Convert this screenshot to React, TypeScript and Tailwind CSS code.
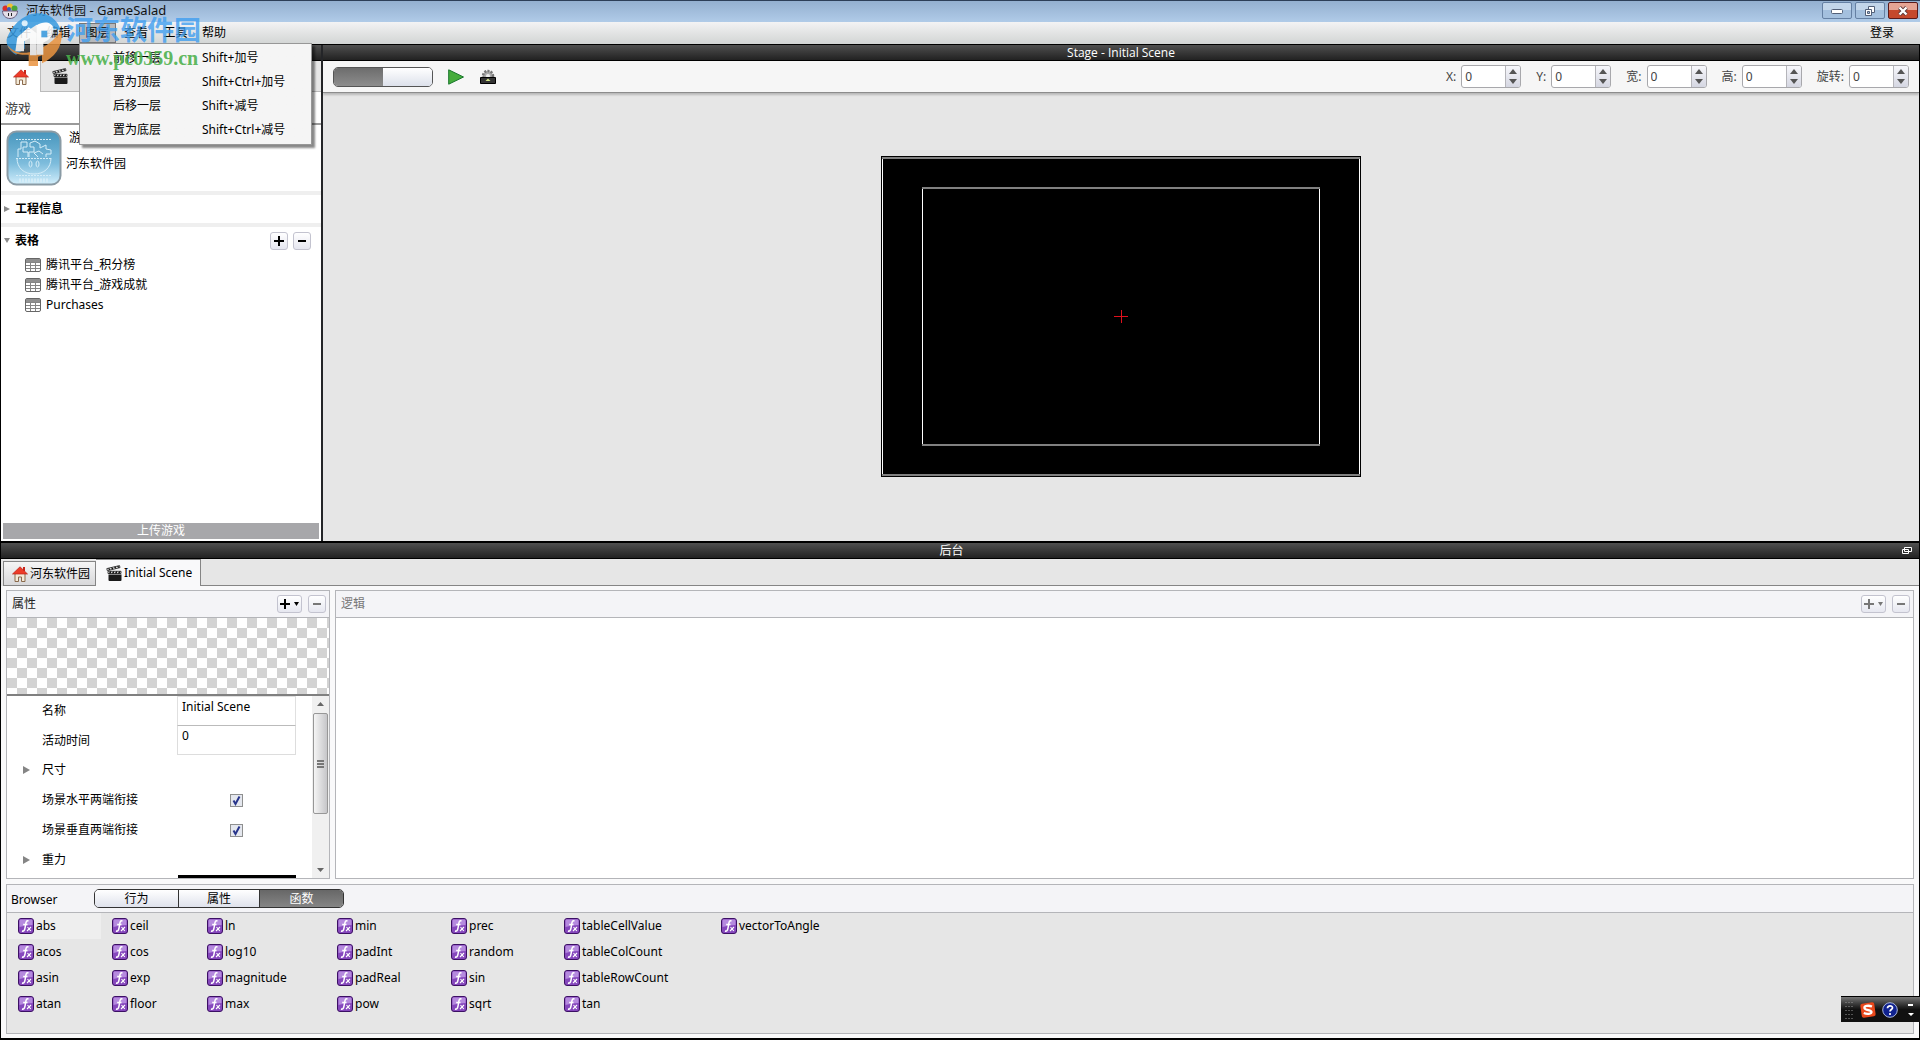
import { useState, type ReactNode } from "react";

interface FunctionColumn {
  width: string;
  items: string[];
}

const shortcuts = [
  { label: "前移一层", keys: "Shift+加号" },
  { label: "置为顶层", keys: "Shift+Ctrl+加号" },
  { label: "后移一层", keys: "Shift+减号" },
  { label: "置为底层", keys: "Shift+Ctrl+减号" },
];

const tables = ["腾讯平台_积分榜", "腾讯平台_游戏成就", "Purchases"];

const functionColumns: FunctionColumn[] = [
  { width: "w-[94px]", items: ["abs", "acos", "asin", "atan"] },
  { width: "w-[95px]", items: ["ceil", "cos", "exp", "floor"] },
  { width: "w-[130px]", items: ["ln", "log10", "magnitude", "max"] },
  { width: "w-[114px]", items: ["min", "padInt", "padReal", "pow"] },
  { width: "w-[113px]", items: ["prec", "random", "sin", "sqrt"] },
  { width: "w-[157px]", items: ["tableCellValue", "tableColCount", "tableRowCount", "tan"] },
  { width: "w-[130px]", items: ["vectorToAngle"] },
];

function HouseIcon() {
  return (
    <svg viewBox="0 0 16 16" className="size-4 shrink-0">
      <path d="M3 8v7.500h3.500V11h3v4.500H13V8L8 3.500z" fill="#f3ead8" stroke="#8b6a4c" />
      <path d="M11 1h2v4h-2z" fill="#c9261a" />
      <path d="M.5 8 8 .8 15.500 8z" fill="#ee3b28" stroke="#b72318" strokeWidth=".7" />
    </svg>
  );
}

function ClapperIcon() {
  return (
    <svg viewBox="0 0 16 16" className="size-4 shrink-0">
      <path d="M2.500 9.500h13V15a1 1 0 0 1-1 1h-11a1 1 0 0 1-1-1z" fill="#1a1a1a" />
      <path d="M2 6.300h13v2.200H2z" fill="#fff" stroke="#111" strokeWidth=".8" />
      <path d="m3.500 8.500 1.500-2M6.500 8.500l1.500-2M9.500 8.500l1.500-2M12.500 8.500l1.500-2" stroke="#111" strokeWidth="1.300" />
      <path d="M.8 3.600 13.500.6l.5 2L1.300 5.700z" fill="#fff" stroke="#111" strokeWidth=".8" />
      <path d="m2.500 3.500 1.500 1.300M5.500 2.700 7 4M8.500 2l1.500 1.300M11.500 1.200 13 2.500" stroke="#111" strokeWidth="1.300" />
    </svg>
  );
}

function TableIcon() {
  return (
    <svg viewBox="0 0 16 14" className="h-3.5 w-4 shrink-0">
      <rect x=".5" y=".5" width="15" height="13" rx="1.500" fill="#fff" stroke="#666" />
      <path d="M1 1h14v3H1z" fill="#8f8f8f" />
      <path d="M1 4.500h14M1 7.500h14M1 10.500h14M5.500 4v9M10.500 4v9" stroke="#858585" />
    </svg>
  );
}

function FxIcon() {
  return (
    <svg viewBox="0 0 16 16" className="size-4 shrink-0">
      <rect x=".5" y=".5" width="15" height="15" rx="2.500" fill="#8648bd" stroke="#3c1064" />
      <path d="M1.500 2.500a1 1 0 0 1 1-1h11a1 1 0 0 1 1 1V7Q8 7 1.500 9z" fill="#b58ade" />
      <path d="M10.500 3C8.200 2.300 8 4 7.500 7.200 7 11 6.500 13.800 4 13M5.200 6.500h4.300" fill="none" stroke="#fff" strokeWidth="1.500" />
      <path d="m9.500 9 3.300 4M13 9l-4 4" stroke="#fff" strokeWidth="1.100" />
    </svg>
  );
}

function AppIcon() {
  return (
    <svg viewBox="0 0 16 16" className="size-4 shrink-0">
      <circle cx="3.500" cy="5.500" r="3" fill="#d9302a" />
      <circle cx="8" cy="3.500" r="3" fill="#f0c233" />
      <circle cx="12.500" cy="5.500" r="3" fill="#4aa53c" />
      <circle cx="7" cy="6" r="2" fill="#3b5bbf" />
      <path d="M.5 8h15c0 4-3 7.500-7.500 7.500S.5 12 .5 8z" fill="#e4dfe8" stroke="#685b7c" />
      <path d="M6.500 10v3M9.500 10v3" stroke="#222" />
    </svg>
  );
}

function SaladIcon() {
  return (
    <svg viewBox="0 0 56 56" className="size-14 shrink-0">
      <defs>
        <linearGradient id="salad" x2="0" y2="1">
          <stop offset="0" stopColor="#4796bd" />
          <stop offset=".6" stopColor="#7dbcdc" />
          <stop offset="1" stopColor="#d3effc" />
        </linearGradient>
      </defs>
      <rect x="1.500" y="1.500" width="53" height="53" rx="9" fill="url(#salad)" stroke="#8a9ba5" strokeWidth="2" />
      <g fill="none" stroke="#d5edf8">
        <path d="M10 9.500h36M10 28.500h36M10 45.500h36" strokeDasharray="2 1" />
        <path d="M11 28C11 38 18 44 28 44s17-6 17-16" />
        <path d="M12 27v-8h3v-7h6v5h-4v5h5v5M23 27v-5h5v-5h-4v-4l5-2 5 3v4l6-3v4l5 1v4h-5v3M32 27l-4-4 5-2 4 3" />
        <ellipse cx="24.500" cy="34" rx="1.500" ry="3" />
        <ellipse cx="31.500" cy="34" rx="1.500" ry="3" />
        <path d="M13 50.500h30" strokeWidth="4" strokeDasharray="2 1" />
      </g>
    </svg>
  );
}

function Watermark() {
  return (
    <div className="pointer-events-none absolute top-3 left-1 z-20 flex items-start">
      <svg viewBox="0 0 180 180" className="size-[60px] shrink-0">
        <g opacity=".85">
          <path d="M8 82C20 45 55 8 95 4c35-3 65 15 76 52-20-10-30 2-44 4L98 38 62 62v48l-26 18C18 118 6 102 8 82z" fill="#369ae0" />
          <path d="M10 98c20 26 50 30 82 18 36-12 56-30 80-60 6 40-14 78-58 98v-24l-12 4v28H74v-34c-30 2-54-4-64-30z" fill="#ea9440" />
          <path d="M40 76 74 46l24 18v66H78V78L60 88v30H34z" fill="#fff" />
          <path d="M98 40c20-14 46-10 50 8 2 20-8 34-30 44v36H98z" fill="#fff" />
          <path d="M112 56h18v20h-18z" fill="#369ae0" />
          <circle cx="62" cy="34" r="9" fill="#d9effc" />
        </g>
      </svg>
      <div className="flex flex-col pl-0.5">
        <span className="text-[27px] leading-9 font-bold whitespace-nowrap text-[#3d9df0]/80">河东软件园</span>
        <span className="font-['Liberation_Serif',serif] text-xl leading-5 font-bold whitespace-nowrap text-[#4bb04b]/90">
          www.pc0359.cn
        </span>
      </div>
    </div>
  );
}

function WindowButton({ label, close, children }: { label: string; close?: boolean; children: ReactNode }) {
  return (
    <button
      aria-label={label}
      className={`flex h-[17px] w-[30px] items-center justify-center rounded-[2px] border ${
        close
          ? "border-[#5a1a1a] bg-linear-to-b from-[#e5a494] from-50% to-[#c5482c] to-50%"
          : "border-[#6580a3] bg-linear-to-b from-[#c3d6ea] from-50% to-[#a4c0de] to-50%"
      }`}
    >
      {children}
    </button>
  );
}

function TitleBar() {
  return (
    <header className="flex h-[22px] items-center gap-2 border-t border-[#2d3f58] bg-linear-to-b from-[#94b0d0] to-[#b0cbe8] pr-0.5 pb-0.5 pl-0.5">
      <AppIcon />
      <h1 className="flex-1 text-[#111]">
        河东软件园<span className="text-[13px]"> - GameSalad</span>
      </h1>
      <div className="flex gap-[3px]">
        <WindowButton label="最小化">
          <svg viewBox="0 0 12 6" className="h-1.5 w-3">
            <rect x=".5" y="1.500" width="11" height="4" rx="1" fill="#fff" stroke="#536078" />
          </svg>
        </WindowButton>
        <WindowButton label="还原">
          <svg viewBox="0 0 12 12" className="size-3">
            <path d="M4.500 1.500h6v6h-6z" fill="#fff" stroke="#536078" />
            <path d="M1.500 4.500h6v6h-6z" fill="#fff" stroke="#536078" />
            <path d="M3.500 6.500h2v2h-2z" fill="#a4c0de" stroke="#536078" />
          </svg>
        </WindowButton>
        <WindowButton label="关闭" close>
          <svg viewBox="0 0 12 10" className="h-2.5 w-3">
            <path d="m2.500 1.500 7 7M9.500 1.500l-7 7" stroke="#5b3838" strokeWidth="4" />
            <path d="m2.500 1.500 7 7M9.500 1.500l-7 7" stroke="#fff" strokeWidth="2.400" />
          </svg>
        </WindowButton>
      </div>
    </header>
  );
}

function MenuBar() {
  return (
    <nav className="relative flex h-[22px] items-center bg-linear-to-b from-[#f3f3f4] to-[#d2d5d4]">
      <button className="w-[38px]">文件</button>
      <button className="w-[41px]">编辑</button>
      <button className="h-5 w-[37px] border border-[#777] bg-[#b7b9bb]">图层</button>
      <button className="w-[40px]">查看</button>
      <button className="w-[39px]">工具</button>
      <button className="w-[38px]">帮助</button>
      <button className="mr-[22px] ml-auto px-1">登录</button>
      <ul className="absolute top-[21px] left-[79px] z-10 w-[233px] border border-[#979797] bg-linear-to-r from-[#f0f0f0] from-[30px] to-[#f5f5f5] to-[31px] py-0.5 shadow-[3px_3px_2px_#0007]">
        {shortcuts.map((item) => (
          <li key={item.label}>
            <button className="flex h-6 w-full items-center pl-[33px] text-left">
              <span className="w-[89px]">{item.label}</span>
              <span>{item.keys}</span>
            </button>
          </li>
        ))}
      </ul>
    </nav>
  );
}

function SquareButton({ label, minus, menu, faded }: { label: string; minus?: boolean; menu?: boolean; faded?: boolean }) {
  return (
    <button
      aria-label={label}
      className={`flex h-[18px] items-center justify-center gap-1 rounded-[3px] border border-[#c3c3cf] bg-linear-to-b from-white to-[#e6e7f0] ${
        menu ? "w-[25px]" : "w-[18px]"
      } ${faded ? "text-[#777]" : "text-black"}`}
    >
      <svg viewBox="0 0 10 10" className="size-2.5" stroke="currentColor" strokeWidth="2">
        <path d={minus ? "M1 5h8" : "M0 5h10M5 0v10"} />
      </svg>
      {menu && (
        <svg viewBox="0 0 5 4" className="h-1 w-[5px]" fill="currentColor">
          <path d="M0 0h5L2.500 4z" />
        </svg>
      )}
    </button>
  );
}

function Arrow({ down }: { down?: boolean }) {
  return (
    <svg viewBox="0 0 6 6" className="size-1.5 shrink-0" fill="#8a8a8a">
      <path d={down ? "M0 0h6L3 5z" : "M0 0v6l6-3z"} />
    </svg>
  );
}

function ProjectPanel() {
  return (
    <aside className="flex w-[322px] shrink-0 flex-col border-r-2 border-[#242528] bg-white">
      <div className="h-4 border-b border-black bg-linear-to-b from-[#505050] to-[#222]" />
      <div className="flex h-[31px]">
        <button aria-label="主页" className="flex w-[39px] items-center justify-center">
          <HouseIcon />
        </button>
        <button aria-label="场景" className="flex w-[39px] items-center justify-center border-b border-l border-[#bbb] bg-[#e6e6e6]">
          <ClapperIcon />
        </button>
        <div className="flex-1 border-b border-[#bbb] bg-[#e6e6e6]" />
      </div>
      <h2 className="flex h-[33px] items-center border-b-2 border-[#9a9a9a] pt-0.5 pl-1 text-[13px] text-[#444]">游戏</h2>
      <div className="flex h-[70px] gap-[3px] border-b-4 border-[#efefef] pl-[5px]">
        <div className="pt-[5px]">
          <SaladIcon />
        </div>
        <div className="leading-[26px]">
          <p className="pl-1">游戏</p>
          <p className="pl-px">河东软件园</p>
        </div>
      </div>
      <button className="flex h-8 items-center gap-[5px] border-b-4 border-[#efefef] pl-[3px] font-bold">
        <Arrow />
        工程信息
      </button>
      <div className="flex h-7 items-center pr-2.5 pl-[3px]">
        <button className="flex flex-1 items-center gap-[5px] font-bold">
          <Arrow down />
          表格
        </button>
        <div className="flex gap-[5px]">
          <SquareButton label="添加表格" />
          <SquareButton label="删除表格" minus />
        </div>
      </div>
      <ul className="pl-6">
        {tables.map((name) => (
          <li key={name} className="flex h-5 items-center gap-[5px]">
            <TableIcon />
            {name}
          </li>
        ))}
      </ul>
      <button className="mx-0.5 mt-auto mb-0.5 h-4 bg-[#a7a7aa] leading-4 text-white">上传游戏</button>
    </aside>
  );
}

function NumberField({ id, label }: { id: string; label: string }) {
  const [value, setValue] = useState(0);

  return (
    <div className="flex items-center gap-[5px] text-[#444]">
      <label htmlFor={id}>{label}</label>
      <div className="flex h-[23px] w-[60px] overflow-hidden rounded-[3px] border border-[#a8a8ac] bg-white">
        <input
          id={id}
          value={value}
          onChange={(e) => setValue(Number(e.target.value) || 0)}
          className="min-w-0 flex-1 pl-[3px] outline-none"
        />
        <div className="flex w-[15px] flex-col border-l border-[#b5b5ba] bg-linear-to-b from-[#f7f7fb] to-[#d5d7e2]">
          <button aria-label={`${label} +`} onClick={() => setValue(value + 1)} className="flex flex-1 items-center justify-center">
            <svg viewBox="0 0 8 5" className="h-[5px] w-2" fill="#555">
              <path d="M4 0l4 5H0z" />
            </svg>
          </button>
          <button aria-label={`${label} -`} onClick={() => setValue(value - 1)} className="flex flex-1 items-center justify-center">
            <svg viewBox="0 0 8 5" className="h-[5px] w-2" fill="#555">
              <path d="M0 0h8L4 5z" />
            </svg>
          </button>
        </div>
      </div>
    </div>
  );
}

function StagePanel() {
  return (
    <section className="flex flex-1 flex-col bg-[#e6e6e6]">
      <h2 className="h-4 border-b border-black bg-linear-to-b from-[#505050] to-[#222] text-center font-['Open_Sans',sans-serif] leading-4 text-white">
        Stage - Initial Scene
      </h2>
      <div className="flex h-8 items-center border-b border-[#8c8c8c] bg-[#f6f6f6] pr-2.5 pl-2.5 shadow-[0_2px_2px_#0003]">
        <div className="flex h-5 w-[100px] overflow-hidden rounded-[5px] border border-[#555]">
          <button aria-label="场景视图" className="flex-1 bg-linear-to-b from-[#6d6d6d] to-[#8d8d8d]" />
          <button aria-label="镜头视图" className="flex-1 bg-linear-to-b from-white to-[#dde1eb]" />
        </div>
        <button aria-label="预览" className="ml-[15px]">
          <svg viewBox="0 0 16 16" className="size-4">
            <path d="M.7.8v14.400L15.500 8z" fill="#45ad3c" stroke="#18762c" strokeLinejoin="round" />
          </svg>
        </button>
        <button aria-label="发布" className="ml-4">
          <svg viewBox="0 0 16 16" className="size-4">
            <circle cx="8" cy="7" r="5" fill="#aaa" stroke="#777" strokeWidth="2.500" strokeDasharray="2 1.200" />
            <circle cx="8" cy="7" r="2" fill="#eee" />
            <path d="M.5 8.500h15v6H.5z" fill="#333" stroke="#000" />
            <path d="m8 9.500 2.500 2.500h-5z" fill="#d5e88a" />
          </svg>
        </button>
        <div className="ml-auto flex gap-[15px]">
          <NumberField id="pos-x" label="X:" />
          <NumberField id="pos-y" label="Y:" />
          <NumberField id="width" label="宽:" />
          <NumberField id="height" label="高:" />
          <NumberField id="rotation" label="旋转:" />
        </div>
      </div>
      <div className="flex flex-1 items-center justify-center pb-px">
        <div className="border border-black">
          <svg viewBox="0 0 478 319" className="h-[319px] w-[478px] bg-black">
            <path d="M.5 0v319M477.500 0v319M40.500 30v259M437.500 30v259" stroke="#fff" />
            <path d="M0 1h478M0 318h478M40 31h398M40 288h398" stroke="#808080" strokeWidth="2" />
            <path d="M232 159.500h14M239.500 153v13" stroke="#e0101c" />
          </svg>
        </div>
      </div>
    </section>
  );
}

function PanelHead({ title, faded }: { title: string; faded?: boolean }) {
  return (
    <div className="flex h-[27px] items-center border-b border-[#b4b5b9] bg-[#f4f4f7] pr-[3px] pb-px pl-[5px]">
      <h3 className={`flex-1 pt-px ${faded ? "text-[#777]" : "text-[#222]"}`}>{title}</h3>
      <div className="flex gap-1.5">
        <SquareButton label={`添加${title}`} menu faded={faded} />
        <SquareButton label={`删除${title}`} minus faded />
      </div>
    </div>
  );
}

function CheckRow({ id, label }: { id: string; label: string }) {
  return (
    <div className="flex h-[30px] items-center pl-[35px]">
      <label htmlFor={id} className="w-[188px]">
        {label}
      </label>
      <span className="relative flex size-[13px]">
        <input id={id} type="checkbox" defaultChecked className="peer size-[13px] appearance-none border border-[#8e8f8f] bg-[#e4e7ee]" />
        <svg viewBox="0 0 13 13" className="pointer-events-none absolute inset-0 hidden size-[13px] peer-checked:block">
          <path d="M3.500 6.500 5.500 10 9.500 2.500" fill="none" stroke="#27348b" strokeWidth="2" />
        </svg>
      </span>
    </div>
  );
}

function FoldRow({ label }: { label: string }) {
  return (
    <button className="flex h-[30px] w-full items-center pl-4">
      <svg viewBox="0 0 7 8" className="h-2 w-[7px]" fill="#858585">
        <path d="M0 0v8l7-4z" />
      </svg>
      <span className="pl-3">{label}</span>
    </button>
  );
}

function AttributesPanel() {
  return (
    <section className="flex w-[324px] flex-col border border-[#b4b5b9] bg-white">
      <PanelHead title="属性" />
      <div className="h-[78px] border-b-2 border-[#808080] bg-[conic-gradient(#fff_25%,#d3d3d3_0_50%,#fff_0_75%,#d3d3d3_0)] bg-size-[20px_20px]" />
      <div className="flex min-h-0 flex-1">
        <div className="flex-1 overflow-hidden">
          <div className="flex h-[30px] pl-[35px]">
            <label htmlFor="scene-name" className="w-[135px] pt-[7px]">
              名称
            </label>
            <input id="scene-name" defaultValue="Initial Scene" className="w-[119px] border border-[#e0e0e0] border-b-[#bbb] pb-2 pl-1" />
          </div>
          <div className="flex h-[29px] pl-[35px]">
            <label htmlFor="active-time" className="w-[135px] pt-[7px]">
              活动时间
            </label>
            <input id="active-time" defaultValue="0" className="w-[119px] border border-t-0 border-[#ddd] pb-2 pl-1" />
          </div>
          <FoldRow label="尺寸" />
          <CheckRow id="wrap-x" label="场景水平两端衔接" />
          <CheckRow id="wrap-y" label="场景垂直两端衔接" />
          <FoldRow label="重力" />
          <div className="mr-4 ml-[171px] h-[3px] bg-black" />
        </div>
        <div className="flex w-[17px] shrink-0 flex-col items-center justify-between bg-[#f0f0f0] px-px py-[6px]">
          <svg viewBox="0 0 7 4" className="h-1 w-[7px]" fill="#666">
            <path d="M3.500 0 7 4H0z" />
          </svg>
          <div className="mt-[7px] mb-auto flex h-[101px] w-[15px] flex-col items-center justify-center gap-px rounded-[2px] border border-[#979797] bg-linear-to-r from-[#f5f5f5] to-[#c6c6c9]">
            <span className="h-0.5 w-[7px] bg-[#777]" />
            <span className="h-0.5 w-[7px] bg-[#777]" />
            <span className="h-0.5 w-[7px] bg-[#777]" />
          </div>
          <svg viewBox="0 0 7 4" className="h-1 w-[7px]" fill="#666">
            <path d="M0 0h7L3.500 4z" />
          </svg>
        </div>
      </div>
    </section>
  );
}

function Browser() {
  const filters = [
    { label: "行为", width: "w-[83px]" },
    { label: "属性", width: "w-[81px]" },
    { label: "函数", width: "w-[84px]" },
  ];

  return (
    <section className="border border-[#b4b5b9] bg-[#e6e6e6]">
      <div className="flex h-7 items-center border-b border-[#b4b5b9] bg-[#f4f4f7] pl-1">
        <h3 className="w-[83px] pt-0.5">Browser</h3>
        <div className="flex h-[19px] overflow-hidden rounded-[5px] border border-[#333]">
          {filters.map((filter) => (
            <button
              key={filter.label}
              className={`border-l border-[#333] leading-[17px] first:border-l-0 ${filter.width} ${
                filter.label === "函数"
                  ? "bg-linear-to-b from-[#676767] to-[#858585] text-white"
                  : "bg-linear-to-b from-white to-[#dfe2ec]"
              }`}
            >
              {filter.label}
            </button>
          ))}
        </div>
      </div>
      <div className="flex h-[120px]">
        {functionColumns.map((column) => (
          <ul key={column.items[0]} className={column.width}>
            {column.items.map((name) => (
              <li key={name} className={`flex h-[26px] items-center gap-0.5 pl-[11px] ${name === "abs" ? "bg-[#eee]" : ""}`}>
                <FxIcon />
                {name}
              </li>
            ))}
          </ul>
        ))}
      </div>
    </section>
  );
}

function Backstage() {
  return (
    <section className="border-t-2 border-black bg-[#e6e6e6]">
      <div className="flex h-4 items-center border-b border-black bg-linear-to-b from-[#505050] to-[#222] pr-[7px]">
        <h2 className="flex-1 text-center leading-4 text-white">后台</h2>
        <button aria-label="弹出窗口">
          <svg viewBox="0 0 10 8" className="h-2 w-2.5" fill="#2c2c2c" stroke="#fff">
            <path d="M.5 2.500h6v4h-6zM2.500.5h7v4h-7z" />
          </svg>
        </button>
      </div>
      <div className="flex h-[27px] items-end">
        <button className="ml-0.5 flex h-[25px] items-center gap-0.5 border border-[#858585] bg-linear-to-b from-[#f5f5f5] to-[#d8d8da] pr-[5px] pl-2">
          <HouseIcon />
          河东软件园
        </button>
        <button className="flex h-[27px] items-center gap-0.5 border-t border-r border-[#858585] bg-[#f9f9fa] pr-2 pl-2.5">
          <ClapperIcon />
          Initial Scene
        </button>
        <div className="flex-1 self-stretch border-b border-[#858585]" />
      </div>
      <div className="flex flex-col gap-[5px] bg-[#f9f9fa] px-[5px] py-1">
        <div className="flex h-[289px] gap-[5px]">
          <AttributesPanel />
          <section className="flex-1 border border-[#b4b5b9] bg-white">
            <PanelHead title="逻辑" faded />
          </section>
        </div>
        <Browser />
      </div>
    </section>
  );
}

function ImeBar() {
  return (
    <div className="absolute right-0 bottom-[18px] z-10 flex h-[26px] w-[79px] items-center border-t border-black bg-linear-to-b from-[#777] to-[#111] to-50% pr-1.5 pl-1">
      <svg viewBox="0 0 8 18" className="h-[18px] w-2">
        <path d="M1 1v17M4 1v17M7 1v17" stroke="#999" strokeDasharray="1 3" />
      </svg>
      <svg viewBox="0 0 16 16" className="ml-[7px] size-4">
        <rect x="1" y="1" width="14" height="14" rx="2" fill="#e9481c" transform="rotate(-8 8 8)" />
        <path d="M12 4.500C8 3 4 4 4.500 6.200S11.500 8 11.500 10 7 12.500 3.800 11" fill="none" stroke="#fff" strokeWidth="2.300" />
      </svg>
      <svg viewBox="0 0 16 16" className="ml-1.5 size-4">
        <circle cx="8" cy="8" r="7.300" fill="#10228f" stroke="#a9b6dd" />
        <path d="M5.500 6.200C5.500 3 10.700 3.200 10.500 6c-.1 1.500-2.500 1.600-2.500 3.500M8 11v2" fill="none" stroke="#fff" strokeWidth="1.700" />
      </svg>
      <svg viewBox="0 0 6 12" className="ml-auto h-3 w-1.5" fill="#fff">
        <path d="M0 0h5v2H0zM0 9h6l-3 3z" />
      </svg>
    </div>
  );
}

export default function App() {
  return (
    <div className="relative flex min-h-screen flex-col overflow-hidden bg-[#e6e6e6] font-['Noto_Sans','Noto_Sans_CJK_SC',sans-serif] text-xs text-black">
      <TitleBar />
      <MenuBar />
      <main className="flex flex-1 flex-col border-x border-t border-b-2 border-black">
        <div className="flex flex-1">
          <ProjectPanel />
          <StagePanel />
        </div>
        <Backstage />
      </main>
      <Watermark />
      <ImeBar />
    </div>
  );
}
